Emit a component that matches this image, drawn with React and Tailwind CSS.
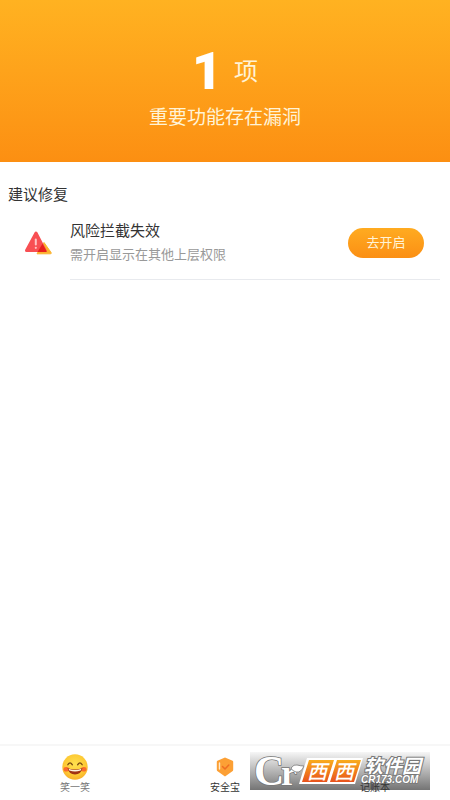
import React from "react";

const AlertIcon = () => (
  <svg viewBox="0 0 28 24" className="w-7 h-6" aria-hidden="true">
    <path
      d="M20 11.500L27 21.400a.8.8 0 0 1-.7 1.400H13z"
      fill="#fbb32f"
      stroke="#fbb32f"
      strokeLinejoin="round"
    />
    <path
      d="M12 2L21 19.500H2.500z"
      fill="#f84f53"
      stroke="#f84f53"
      strokeWidth="3"
      strokeLinejoin="round"
    />
    <path d="M18.500 12.800L22.600 20a.7.7 0 0 1-.6 1H13.500z" fill="#e8201c" />
    <path d="M11.800 8.500v5" stroke="#ffc4c4" strokeWidth="2" strokeLinecap="round" />
    <circle cx="11.800" cy="16.800" r="1.100" fill="#ffc4c4" />
  </svg>
);

const SmileIcon = () => (
  <svg viewBox="0 0 26 26" className="w-[26px] h-[26px]" aria-hidden="true">
    <defs>
      <radialGradient id="face" cx="50%" cy="40%" r="60%">
        <stop offset="0" stopColor="#ffe14f" />
        <stop offset="0.7" stopColor="#fdc934" />
        <stop offset="1" stopColor="#f8b02a" />
      </radialGradient>
    </defs>
    <circle cx="13" cy="13" r="12.7" fill="url(#face)" />
    <ellipse cx="4.2" cy="15.2" rx="2.700" ry="2.300" fill="#fb6a2c" />
    <ellipse cx="21.8" cy="15.2" rx="2.700" ry="2.300" fill="#fb6a2c" />
    <path
      d="M5.800 10.800q2.200-4 4.600 0M15.600 10.800q2.400-4 4.600 0"
      fill="none"
      stroke="#7a4a12"
      strokeWidth="1.300"
      strokeLinecap="round"
    />
    <path d="M5.500 14q7.500 3 15 0q-1.500 6.500-7.500 6.500t-7.500-6.500z" fill="#a03214" />
    <path d="M6.500 14.700q6.500 2.400 13 0l-.8 1.800q-5.700 2-11.400 0z" fill="#fff3e0" />
  </svg>
);

const ShieldIcon = () => (
  <svg viewBox="0 0 18 20" className="w-[18px] h-5" aria-hidden="true">
    <path
      d="M9 .5l7.600 3.200q.6.300.6 1v8q0 1-.8 1.500L9 19.500l-7.400-5.300q-.8-.5-.8-1.500v-8q0-.7.6-1z"
      fill="#fca035"
    />
    <path d="M3.500 6v6" stroke="#ffe9cc" strokeWidth="1.400" strokeLinecap="round" />
    <path
      d="M6.500 9.500l2.500 2.500 3.800-4"
      fill="none"
      stroke="#ef6d22"
      strokeWidth="1.500"
      strokeLinecap="round"
      strokeLinejoin="round"
    />
  </svg>
);

const Watermark = () => (
  <svg viewBox="0 0 180 38" className="w-[180px] h-[38px]" role="img" aria-label="西西软件园">
    <defs>
      <linearGradient id="plate" x1="0" y1="0" x2="0" y2="1">
        <stop offset="0" stopColor="#f6f6f6" />
        <stop offset="1" stopColor="#747474" />
      </linearGradient>
      <linearGradient id="tile" x1="0" y1="0" x2="0" y2="1">
        <stop offset="0" stopColor="#f9ac1e" />
        <stop offset="1" stopColor="#e8521c" />
      </linearGradient>
    </defs>
    <rect width="180" height="38" fill="url(#plate)" />
    <g
      fontFamily='"Liberation Serif", serif'
      fontWeight="700"
      fill="#fff"
      stroke="#777"
      strokeWidth="1.500"
      paintOrder="stroke"
    >
      <text x="4" y="33" fontSize="42">C</text>
      <text x="31" y="33" fontSize="36">r</text>
    </g>
    <path
      d="M41 16q3-4 6-3q4 1 7 1q-3 7-8 6q-4-1-5-4z"
      fill="#fff"
      stroke="#777"
      strokeWidth="0.800"
    />
    <path d="M57 6h56l-8 26h-56z" fill="#fff" />
    <path d="M59 8h25l-7 22h-25zM87 8h24l-7 22h-24z" fill="url(#tile)" />
    <g fontFamily='"Noto Sans CJK SC", sans-serif' fontStyle="italic" fontWeight="500" fill="#fff">
      <text x="57" y="27" fontSize="20">西</text>
      <text x="84" y="27" fontSize="20">西</text>
      <text x="114" y="21" fontSize="19" fontWeight="700" stroke="#777" strokeWidth="2" paintOrder="stroke">
        软件园
      </text>
    </g>
    <text
      x="111"
      y="31"
      fontFamily='"Liberation Sans", sans-serif'
      fontStyle="italic"
      fontWeight="700"
      fontSize="10"
      fill="#fff"
      stroke="#777"
      strokeWidth="1.500"
      paintOrder="stroke"
    >
      CR173.COM
    </text>
  </svg>
);

const App = () => {
  return (
    <div className="flex flex-col min-h-screen bg-white font-['Roboto','Noto_Sans_CJK_SC',sans-serif]">
      <header className="flex flex-col items-center pt-12 pb-8 text-white bg-linear-to-b from-[#ffb221] to-[#fc8f12]">
        <p className="flex items-center gap-3">
          <span className="text-[52px] leading-12 font-black">1</span>
          <span className="text-2xl text-[#fff3d6]">项</span>
        </p>
        <h1 className="mt-2.5 text-[19px] leading-6 text-[#fff3d6]">重要功能存在漏洞</h1>
      </header>

      <main className="grow px-2 pt-[21px]">
        <h2 className="text-[15px] leading-6 text-[#333]">建议修复</h2>
        <div className="flex items-center mx-4 mt-3">
          <AlertIcon />
          <div className="grow ml-[18px]">
            <h3 className="text-[15px] leading-6 text-[#333]">风险拦截失效</h3>
            <p className="text-[13px] leading-6 text-[#999]">需开启显示在其他上层权限</p>
          </div>
          <button className="w-[76px] h-[30px] mr-0.5 rounded-full text-[13px] text-[#fff3d6] bg-linear-to-b from-[#ffab20] to-[#fb8f14]">
            去开启
          </button>
        </div>
        <hr className="ml-[62px] mr-0.5 mt-3 border-[#e8eaee]" />
      </main>

      <nav className="relative grid grid-cols-3 h-14 pt-2 border-t-2 border-[#f7f7f7] text-[10px] leading-4 text-[#333]">
        <a href="#laugh" className="flex flex-col items-center text-[#777]">
          <SmileIcon />
          笑一笑
        </a>
        <a href="#safe" className="flex flex-col items-center">
          <span className="flex items-center h-[26px]">
            <ShieldIcon />
          </span>
          安全宝
        </a>
        <a href="#book" className="relative z-10 flex flex-col items-center pt-[26px]">
          记账本
        </a>
        <div className="absolute right-5 top-1.5">
          <Watermark />
        </div>
      </nav>
    </div>
  );
};

export default App;
